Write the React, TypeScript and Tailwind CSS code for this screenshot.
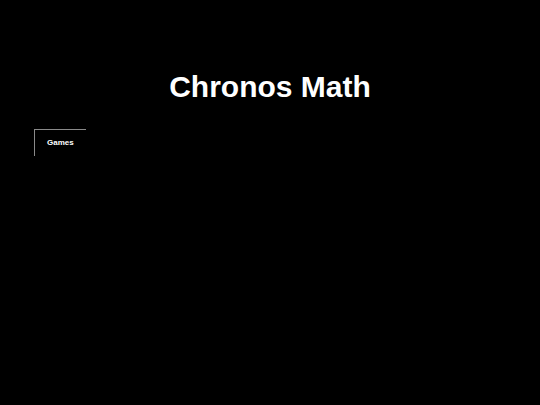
export default function App() {
  return (
    <div className="min-h-[405px] w-full bg-black text-white" style={{ fontFamily: '"Liberation Sans", Arial, sans-serif' }}>
      <div className="flex justify-center pt-[68px]">
        <h1 className="text-[30px] font-bold leading-[38px]">Chronos Math</h1>
      </div>
      <div className="pl-[34px] pt-[23px]">
        <div className="flex h-[27px] w-[52px] items-center border-l border-t border-[#8a8a8a] pl-[12px]">
          <span className="text-[8px] font-bold leading-none">Games</span>
        </div>
      </div>
    </div>
  );
}
